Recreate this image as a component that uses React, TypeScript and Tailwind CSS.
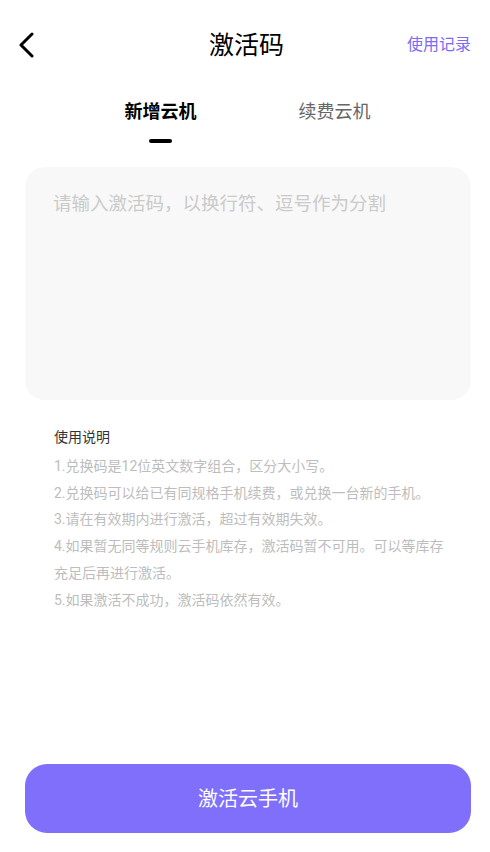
import { useState } from "react";

const rules = [
  "1.兑换码是12位英文数字组合，区分大小写。",
  "2.兑换码可以给已有同规格手机续费，或兑换一台新的手机。",
  "3.请在有效期内进行激活，超过有效期失效。",
  "4.如果暂无同等规则云手机库存，激活码暂不可用。可以等库存充足后再进行激活。",
  "5.如果激活不成功，激活码依然有效。",
];

export default function App() {
  const [tab, setTab] = useState(0);
  const [codes, setCodes] = useState("");

  return (
    <div className="w-[490px] h-[852px] bg-white flex flex-col font-['Roboto','Noto_Sans_CJK_SC',sans-serif] text-black">
      {/* Header */}
      <div className="h-[90px] grid grid-cols-[1fr_auto_1fr] items-center">
        <button className="justify-self-start pl-[18px]" aria-label="back">
          <svg width="17" height="26" viewBox="0 0 17 26" fill="none" stroke="black" strokeWidth="3" strokeLinecap="round" strokeLinejoin="round">
            <path d="M14 2 L3 13 L14 24" />
          </svg>
        </button>
        <h1 className="text-[25px] leading-none pl-[3px]">激活码</h1>
        <a className="justify-self-end pr-[19px] text-[16px] text-[#7b6cf3]">使用记录</a>
      </div>

      {/* Tabs */}
      <div className="mt-[8px] flex justify-center gap-[102px] pl-[5px]">
        {["新增云机", "续费云机"].map((t, i) => (
          <button key={t} onClick={() => setTab(i)} className="flex flex-col items-center">
            <span
              className={`text-[18px] leading-[27px] ${
                tab === i ? "font-semibold text-black" : "text-[#666666]"
              }`}
            >
              {t}
            </span>
            <span
              className={`mt-[14px] w-[23px] h-[4px] rounded-full ${
                tab === i ? "bg-black" : "bg-transparent"
              }`}
            />
          </button>
        ))}
      </div>

      {/* Input */}
      <textarea
        value={codes}
        onChange={(e) => setCodes(e.target.value)}
        placeholder="请输入激活码，以换行符、逗号作为分割"
        className="mt-[24px] ml-[25px] mr-[19px] h-[233px] rounded-[20px] bg-[#f8f8f8] px-[28px] pt-[24px] text-[18.5px] leading-[27px] resize-none outline-none placeholder:text-[#cacaca]"
      />

      {/* Instructions */}
      <div className="mt-[27px] pl-[54px] pr-[44px]">
        <p className="text-[14px] leading-[20px] text-[#333333]">使用说明</p>
        <div className="mt-[6px] text-[14px] leading-[26.7px] text-[#bdbdbd]">
          {rules.map((r) => (
            <p key={r}>{r}</p>
          ))}
        </div>
      </div>

      {/* Submit */}
      <button className="mt-auto mb-[19px] ml-[25px] mr-[19px] h-[69px] rounded-[22px] bg-[#7f6ffa] text-white text-[20px]">
        激活云手机
      </button>
    </div>
  );
}
